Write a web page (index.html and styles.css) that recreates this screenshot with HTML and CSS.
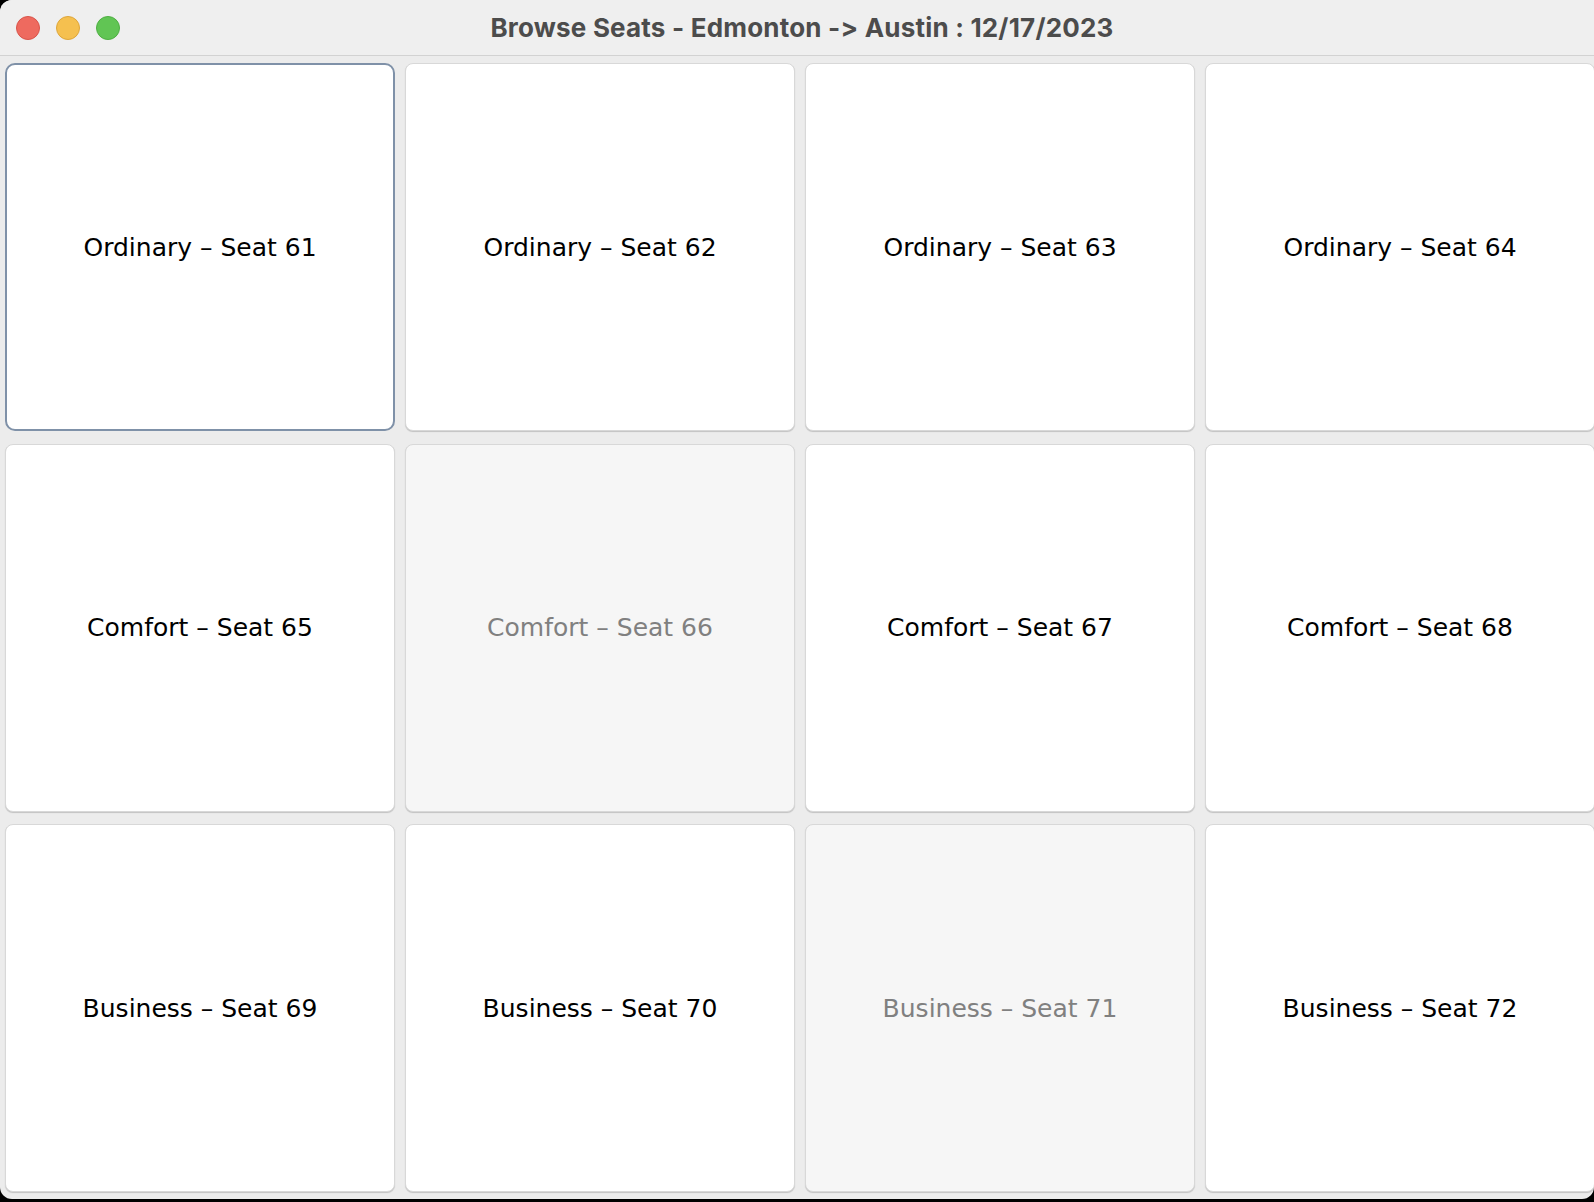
FILE: index.html
```html
<!DOCTYPE html>
<html>
<head>
<meta charset="utf-8">
<link rel="stylesheet" href="styles.css">
</head>
<body>
<div class="window">
  <div class="titlebar">
    <div class="lights">
      <span class="light red"></span>
      <span class="light yellow"></span>
      <span class="light green"></span>
    </div>
    <div class="title">Browse Seats - Edmonton -&gt; Austin : 12/17/2023</div>
  </div>
  <div class="grid">
    <div class="seat selected">Ordinary – Seat 61</div>
    <div class="seat">Ordinary – Seat 62</div>
    <div class="seat">Ordinary – Seat 63</div>
    <div class="seat">Ordinary – Seat 64</div>
    <div class="seat">Comfort – Seat 65</div>
    <div class="seat disabled">Comfort – Seat 66</div>
    <div class="seat">Comfort – Seat 67</div>
    <div class="seat">Comfort – Seat 68</div>
    <div class="seat">Business – Seat 69</div>
    <div class="seat">Business – Seat 70</div>
    <div class="seat disabled">Business – Seat 71</div>
    <div class="seat">Business – Seat 72</div>
  </div>
</div>
</body>
</html>
```
FILE: styles.css
```css
html, body {
  margin: 0;
  padding: 0;
  background: #000;
}
.window {
  width: 1594px;
  height: 1199px;
  background: #ececec;
  border-radius: 12px 0 12px 12px;
  overflow: hidden;
  display: flex;
  flex-direction: column;
}
.titlebar {
  height: 55px;
  border-bottom: 1px solid #d2d2d2;
  background: #efefef;
  position: relative;
  display: flex;
  align-items: center;
  justify-content: center;
  flex-shrink: 0;
}
.lights {
  position: absolute;
  left: 16px;
  top: 16px;
  display: flex;
  gap: 16px;
}
.light {
  width: 24px;
  height: 24px;
  border-radius: 50%;
  box-sizing: border-box;
}
.red { background: #ee6a5f; border: 1px solid #d9544a; }
.yellow { background: #f5c04f; border: 1px solid #dea63a; }
.green { background: #61c554; border: 1px solid #4eaf42; }
.title {
  font-family: "Inter", "Roboto", sans-serif;
  font-weight: 700;
  font-size: 26px;
  color: #4c4c4c;
  letter-spacing: 0.2px;
  padding-left: 10px;
}
.grid {
  display: grid;
  grid-template-columns: repeat(4, 390px);
  grid-template-rows: repeat(3, 368px);
  column-gap: 10px;
  row-gap: 12.5px;
  padding: 7px 0 0 5px;
}
.seat {
  background: #fff;
  border: 1px solid #d8d8d8;
  border-radius: 8px;
  box-shadow: 0 1px 1px rgba(0,0,0,0.18);
  display: flex;
  align-items: center;
  justify-content: center;
  font-family: "DejaVu Sans", sans-serif;
  font-size: 25px;
  color: #000;
  box-sizing: border-box;
}
.seat.selected {
  border: 2px solid #7f91a8;
  border-radius: 10px;
  box-shadow: none;
}
.seat.disabled {
  background: #f6f6f6;
  color: #808080;
}
```
